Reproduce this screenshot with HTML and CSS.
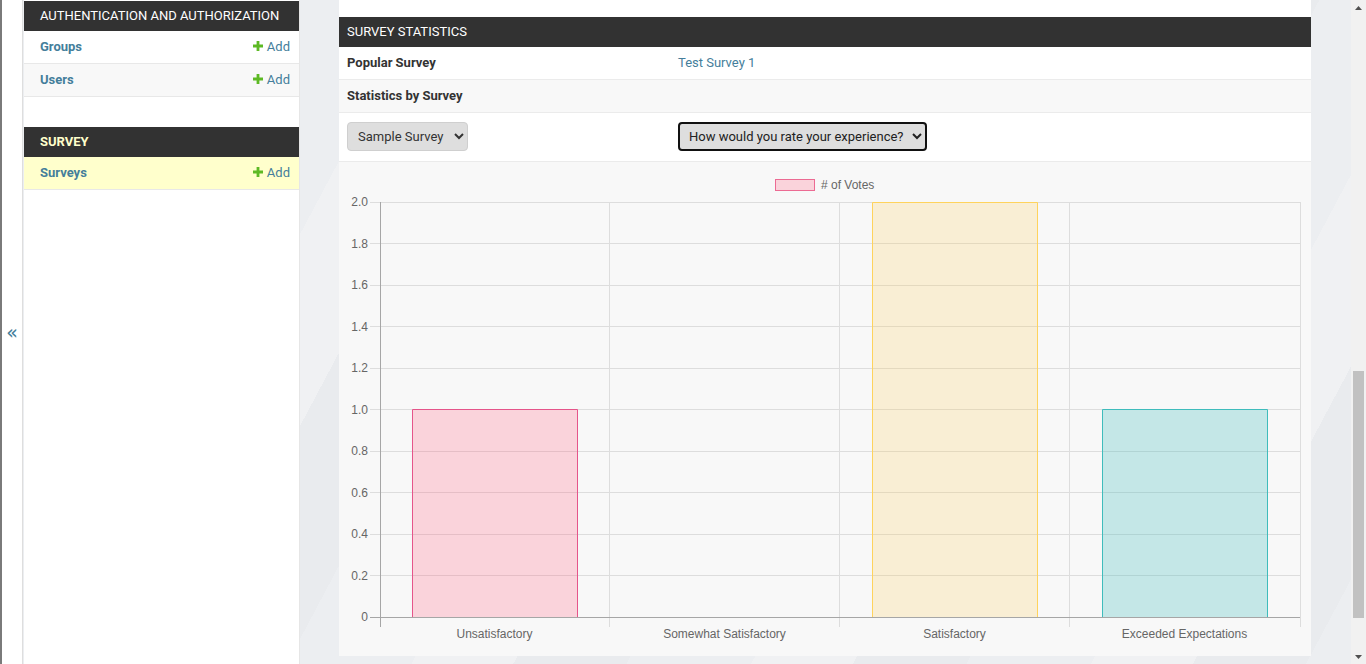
FILE: index.html
```html
<!DOCTYPE html>
<html lang="en">
<head>
<meta charset="utf-8">
<title>Site administration</title>
<link rel="stylesheet" href="styles.css">
</head>
<body>
<div class="layout">
  <button class="toggle-nav" type="button" aria-label="Toggle navigation">«</button>
  <nav class="nav-sidebar">
    <div class="app-module">
      <div class="caption">Authentication and Authorization</div>
      <div class="model-row">
        <a class="model-link" href="#">Groups</a>
        <a class="add-link" href="#"><svg class="plus" viewBox="0 0 10 10" width="10" height="10"><path d="M3.6 0h2.8v3.6H10v2.8H6.4V10H3.6V6.4H0V3.6h3.6z" fill="#5db924"/></svg>Add</a>
      </div>
      <div class="model-row alt">
        <a class="model-link" href="#">Users</a>
        <a class="add-link" href="#"><svg class="plus" viewBox="0 0 10 10" width="10" height="10"><path d="M3.6 0h2.8v3.6H10v2.8H6.4V10H3.6V6.4H0V3.6h3.6z" fill="#5db924"/></svg>Add</a>
      </div>
    </div>
    <div class="app-module current-app">
      <div class="caption">Survey</div>
      <div class="model-row current">
        <a class="model-link" href="#">Surveys</a>
        <a class="add-link" href="#"><svg class="plus" viewBox="0 0 10 10" width="10" height="10"><path d="M3.6 0h2.8v3.6H10v2.8H6.4V10H3.6V6.4H0V3.6h3.6z" fill="#5db924"/></svg>Add</a>
      </div>
    </div>
  </nav>
  <main class="main">
    <div class="card">
      <section class="stats-module">
        <div class="caption main-caption">Survey Statistics</div>
        <div class="stat-row">
          <div class="cell label">Popular Survey</div>
          <div class="cell"><a class="link" href="#">Test Survey 1</a></div>
        </div>
        <div class="stat-row alt">
          <div class="cell label">Statistics by Survey</div>
          <div class="cell"></div>
        </div>
        <div class="stat-row select-row">
          <div class="cell">
            <select class="sel">
              <option>Sample Survey</option>
              <option>Test Survey 1</option>
            </select>
          </div>
          <div class="cell">
            <select class="sel focused">
              <option>How would you rate your experience?</option>
            </select>
          </div>
        </div>
        <div class="chart-row">
          <svg class="chart" width="972" height="494" viewBox="0 0 972 494" font-family="'Liberation Sans', Arial, sans-serif" font-size="12">
            <rect x="436.5" y="17.5" width="39" height="11" fill="rgba(255,99,132,0.25)" stroke="#ec6b93" stroke-width="1"/>
            <text x="482" y="27" fill="#666">&#35; of Votes</text>
            <g stroke="#dddddd" stroke-width="1">
              <line x1="31" y1="40.5" x2="961" y2="40.5"/>
              <line x1="31" y1="81.5" x2="961" y2="81.5"/>
              <line x1="31" y1="123.5" x2="961" y2="123.5"/>
              <line x1="31" y1="164.5" x2="961" y2="164.5"/>
              <line x1="31" y1="206.5" x2="961" y2="206.5"/>
              <line x1="31" y1="247.5" x2="961" y2="247.5"/>
              <line x1="31" y1="289.5" x2="961" y2="289.5"/>
              <line x1="31" y1="330.5" x2="961" y2="330.5"/>
              <line x1="31" y1="372.5" x2="961" y2="372.5"/>
              <line x1="31" y1="413.5" x2="961" y2="413.5"/>
              <line x1="270.5" y1="40" x2="270.5" y2="465"/>
              <line x1="500.5" y1="40" x2="500.5" y2="465"/>
              <line x1="730.5" y1="40" x2="730.5" y2="465"/>
              <line x1="961.5" y1="40" x2="961.5" y2="465"/>
            </g>
            <g fill="#666" text-anchor="end">
              <text x="29" y="44">2.0</text>
              <text x="29" y="85.5">1.8</text>
              <text x="29" y="127">1.6</text>
              <text x="29" y="168.5">1.4</text>
              <text x="29" y="210">1.2</text>
              <text x="29" y="251.5">1.0</text>
              <text x="29" y="293">0.8</text>
              <text x="29" y="334.5">0.6</text>
              <text x="29" y="376">0.4</text>
              <text x="29" y="417.5">0.2</text>
              <text x="29" y="459">0</text>
            </g>
            <rect x="73.5" y="247.5" width="165" height="208" fill="rgba(255,99,132,0.25)"/>
            <path d="M73.5 455.5V247.5H238.5V455.5" fill="none" stroke="#e5558a"/>
            <rect x="533.5" y="40.5" width="165" height="415" fill="rgba(255,206,86,0.22)"/>
            <path d="M533.5 455.5V40.5H698.5V455.5" fill="none" stroke="#ffd35c"/>
            <rect x="763.5" y="247.5" width="165" height="208" fill="rgba(75,192,192,0.3)"/>
            <path d="M763.5 455.5V247.5H928.5V455.5" fill="none" stroke="#3fbcbc"/>
            <g stroke="#a6a6a6" stroke-width="1">
              <line x1="41.5" y1="40" x2="41.5" y2="465"/>
              <line x1="31" y1="455.5" x2="961" y2="455.5"/>
            </g>
            <g fill="#666" text-anchor="middle">
              <text x="155.5" y="476">Unsatisfactory</text>
              <text x="385.5" y="476">Somewhat Satisfactory</text>
              <text x="615.5" y="476">Satisfactory</text>
              <text x="845.5" y="476">Exceeded Expectations</text>
            </g>
          </svg>
        </div>
      </section>
    </div>
  </main>
  <div class="scrollbar" aria-hidden="true">
    <div class="sb-arrow"><svg width="7" height="4" viewBox="0 0 7 4"><path d="M0 4L3.5 0L7 4z" fill="#505050"/></svg></div>
    <div class="sb-track"><div class="sb-thumb"></div></div>
    <div class="sb-arrow"><svg width="7" height="4" viewBox="0 0 7 4"><path d="M0 0L3.5 4L7 0z" fill="#505050"/></svg></div>
  </div>
</div>
</body>
</html>
```

FILE: styles.css
```css
html, body {
  margin: 0;
  padding: 0;
  height: 100%;
  overflow: hidden;
}
body {
  font-family: Roboto, "Liberation Sans", Arial, sans-serif;
  font-size: 13px;
  color: #333;
  background: #eceef1;
}
a {
  text-decoration: none;
}
.layout {
  display: flex;
  height: 100vh;
}
.toggle-nav {
  flex: 0 0 23px;
  width: 23px;
  height: 100%;
  box-sizing: border-box;
  margin: 0;
  padding: 0 0 0 0;
  border: 0;
  border-left: 2px solid #7a7a7a;
  border-right: 1px solid #dedede;
  background: #fff;
  color: #447e9b;
  font-family: "DejaVu Sans", sans-serif;
  font-size: 19px;
  line-height: 1;
  display: flex;
  align-items: center;
  justify-content: center;
  cursor: pointer;
}
.nav-sidebar {
  flex: 0 0 276px;
  width: 276px;
  height: 100%;
  box-sizing: border-box;
  padding-top: 1px;
  margin-left: 1px;
  border-right: 1px solid #e6e6e6;
  background: #fff;
  overflow: hidden;
}
.app-module {
  margin-bottom: 30px;
}
.caption {
  background: #323232;
  color: #fff;
  font-size: 13px;
  line-height: 14px;
  letter-spacing: 0;
  text-transform: uppercase;
  white-space: nowrap;
  padding: 8px 16px;
}
.current-app .caption {
  color: #ffffcc;
  font-weight: 700;
}
.model-row {
  display: flex;
  justify-content: space-between;
  align-items: center;
  box-sizing: border-box;
  height: 33px;
  padding: 0 9px 2px 16px;
  border-bottom: 1px solid #e8e8e8;
  background: #fff;
}
.model-row.alt {
  background: #f8f8f8;
}
.model-row.current {
  background: #ffffcc;
}
.model-link {
  color: #447e9b;
  font-weight: 700;
}
.add-link {
  display: flex;
  align-items: center;
  gap: 4px;
  color: #447e9b;
}
.plus {
  display: block;
}
.main {
  flex: 1 1 auto;
  min-width: 0;
  height: 100%;
  box-sizing: border-box;
  padding: 0 0 0 39px;
  background: repeating-linear-gradient(118deg, #eceef1 0 110px, #f0f1f3 110px 200px, #e9ebee 200px 300px);
}
.card {
  width: 972px;
  background: #fff;
  padding-top: 17px;
}
.stats-module {
  background: #fff;
}
.main-caption {
  padding: 8px 8px;
}
.stat-row {
  display: grid;
  grid-template-columns: 331px 1fr;
  border-bottom: 1px solid #ebebeb;
  background: #fff;
}
.stat-row.alt {
  background: #f8f8f8;
}
.cell {
  padding: 8px;
  line-height: 16px;
}
.cell.label {
  font-weight: 700;
  color: #333;
}
.link {
  color: #447e9b;
}
.select-row .cell {
  padding: 9px 8px 10px;
  line-height: 0;
}
.sel {
  height: 29px;
  box-sizing: border-box;
  padding: 0 7px 0 6px;
  font-family: Roboto, "Liberation Sans", Arial, sans-serif;
  font-size: 13px;
  color: #333;
  background-color: #dedede;
  border: 1px solid #cfcfcf;
  border-radius: 4px;
}
.sel.focused {
  border: 2px solid #111;
  color: #222;
  padding: 0 5px 0 5px;
}
.chart-row {
  background: #f8f8f8;
  height: 494px;
}
.chart {
  display: block;
}
.scrollbar {
  flex: 0 0 15px;
  width: 15px;
  height: 100%;
  display: flex;
  flex-direction: column;
  background: #f1f1f1;
}
.sb-arrow {
  flex: 0 0 15px;
  display: flex;
  align-items: center;
  justify-content: center;
}
.sb-track {
  flex: 1 1 auto;
  padding: 356px 2px 31px;
  display: flex;
}
.sb-thumb {
  flex: 1 1 auto;
  background: #c1c1c1;
}
```
